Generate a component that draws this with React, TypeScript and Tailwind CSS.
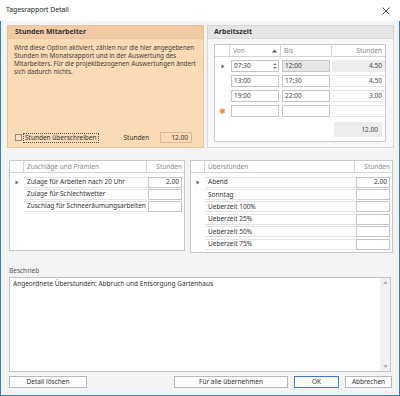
import { ReactNode } from "react";

const ueberstunden = ["Abend", "Sonntag", "Ueberzeit 100%", "Ueberzeit 25%", "Ueberzeit 50%", "Ueberzeit 75%"];
const zuschlaege = ["Zulage für Arbeiten nach 20 Uhr", "Zulage für Schlechtwetter", "Zuschlag für Schneeräumungsarbeiten"];

function RowMarker() {
  return (
    <svg width="4" height="5" viewBox="0 0 4 5">
      <path d="M0.5 0.5 L3.5 2.5 L0.5 4.5 Z" fill="#666" />
    </svg>
  );
}

function Btn({ children, w, primary }: { children: ReactNode; w: string; primary?: boolean }) {
  return (
    <div
      className={`${w} h-[12px] flex items-center justify-center border bg-[#fdfdfd] text-[6.5px] text-[#333] ${
        primary ? "border-[#3b7fd0]" : "border-[#b9b9b9]"
      }`}
    >
      {children}
    </div>
  );
}

export default function App() {
  return (
    <div className="w-[400px] h-[396px] flex flex-col overflow-hidden whitespace-nowrap bg-white font-['Noto_Sans',sans-serif] text-[#333]">
      {/* title */}
      <div className="h-[21px] shrink-0 flex items-center justify-between pl-[6px] pr-[10px] text-[6.8px] text-[#222]">
        <span>Tagesrapport Detail</span>
        <svg width="8" height="8" viewBox="0 0 8 8">
          <path d="M0.5 0.5 L7.5 7.5 M7.5 0.5 L0.5 7.5" stroke="#333" strokeWidth="0.9" />
        </svg>
      </div>

      <div className="flex-1 flex flex-col bg-[#f4f4f4] border-x border-b border-[#2f7fd6] pt-[4px]">
        {/* top panels */}
        <div className="flex gap-[3px] pl-[6px] h-[123px] shrink-0">
          <div className="w-[197px] flex flex-col border border-[#e7c39c] bg-[#fbdab6]">
            <div className="h-[13px] flex items-center px-[7px] bg-[#f2cba4] border-b border-[#e9c39a] font-bold text-[7px] text-[#333]">
              Stunden Mitarbeiter
            </div>
            <div className="px-[6px] pt-[5px] text-[6.3px] leading-[8px] text-[#444]">
              Wird diese Option aktiviert, zählen nur die hier angegebenen
              <br />
              Stunden im Monatsrapport und in der Auswertung des
              <br />
              Mitarbeiters. Für die projektbezogenen Auswertungen ändert
              <br />
              sich dadurch nichts.
            </div>
            <div className="flex-1" />
            <div className="flex items-center h-[11px] mb-[4px] pl-[7px] pr-[11px] text-[6.5px] text-[#333]">
              <div className="w-[7px] h-[7px] border border-[#8d8d8d] bg-[#fce3c6]" />
              <div className="ml-[1px] px-[1px] border border-dotted border-[#555] leading-[8px]">Stunden überschreiben</div>
              <div className="ml-[25px]">Stunden</div>
              <div className="ml-auto w-[32px] h-[11px] border border-[#e0b98f] flex items-center justify-end pr-[3px]">12.00</div>
            </div>
          </div>

          <div className="w-[187px] flex flex-col border border-[#d6d6d6] bg-[#f8f8f8]">
            <div className="h-[13px] flex items-center px-[6px] bg-[#e5e5e5] border-b border-[#dadada] font-bold text-[7px] text-[#333]">
              Arbeitszeit
            </div>
            <div className="ml-[6px] mt-[5px] w-[172px] h-[98px] border border-[#c9c9c9] bg-white flex flex-col text-[6.5px]">
              <div className="h-[12px] flex border-b border-[#d4d4d4] text-[#8a8a8a]">
                <div className="w-[15px] border-r border-[#d4d4d4]" />
                <div className="w-[51px] flex items-center justify-between px-[3px] border-r border-[#d4d4d4]">
                  <span>Von</span>
                  <svg width="5" height="4" viewBox="0 0 5 4">
                    <path d="M0 3.5 L2.5 0.5 L5 3.5 Z" fill="#555" />
                  </svg>
                </div>
                <div className="w-[51px] flex items-center px-[3px] border-r border-[#d4d4d4]">Bis</div>
                <div className="flex-1 flex items-center justify-end px-[3px]">Stunden</div>
              </div>
              {[
                ["07:30", "12:00", "4.50"],
                ["13:00", "17:30", "4.50"],
                ["19:00", "22:00", "3.00"],
                ["", "", ""],
              ].map((r, i) => (
                <div key={i} className="h-[15px] pt-[3px] flex text-[#444]">
                  <div className="w-[15px] flex items-center justify-center">
                    {i === 0 && <RowMarker />}
                    {i === 3 && <span className="text-[#f08a24] text-[8px] leading-none">✱</span>}
                  </div>
                  <div className="w-[51px] pl-[1px] pr-[2px]">
                    <div className="h-[12px] border border-[#c4c4c4] bg-white flex items-center justify-between pl-[2px] pr-[1px]">
                      <span>{r[0]}</span>
                      {i === 0 && (
                        <svg width="4" height="8" viewBox="0 0 4 8">
                          <path d="M0.5 3 L2 1.3 L3.5 3 Z M0.5 5 L2 6.7 L3.5 5 Z" fill="#555" />
                        </svg>
                      )}
                    </div>
                  </div>
                  <div className="w-[51px] pl-[1px] pr-[2px]">
                    <div
                      className={`h-[12px] border border-[#c4c4c4] flex items-center pl-[2px] ${
                        i === 0 ? "bg-[#e6e6e6]" : "bg-white"
                      }`}
                    >
                      {r[1]}
                    </div>
                  </div>
                  <div
                    className={`flex-1 h-[12px] flex items-center justify-end pr-[3px] border-y ${
                      i === 0 ? "bg-[#ececec] border-[#ececec]" : "bg-white border-[#e4e4e4]"
                    }`}
                  >
                    {r[2]}
                  </div>
                </div>
              ))}
              <div className="flex-1 flex items-start justify-end pt-[5px] pr-[3px]">
                <div className="w-[48px] h-[15px] bg-[#ececec] flex items-center justify-end pr-[4px] text-[#444]">12.00</div>
              </div>
            </div>
          </div>
        </div>

        {/* grids */}
        <div className="flex gap-[5px] pl-[8px] mt-[12px] h-[93px] shrink-0 items-start text-[6.5px]">
          <div className="w-[176px] h-[91px] border border-[#c9c9c9] bg-white flex flex-col">
            <div className="h-[12px] flex border-b border-[#d4d4d4] text-[#8a8a8a]">
              <div className="w-[14px] border-r border-[#d4d4d4]" />
              <div className="w-[123px] flex items-center px-[3px] border-r border-[#d4d4d4]">Zuschläge und Prämien</div>
              <div className="flex-1 flex items-center justify-end px-[2px]">Stunden</div>
            </div>
            <div className="h-[3px]" />
            {zuschlaege.map((z, i) => (
              <div key={z} className="h-[12px] flex items-center text-[#333]">
                <div className="w-[14px] flex items-center justify-center">{i === 0 && <RowMarker />}</div>
                <div className="w-[123px] h-[11px] flex items-center px-[3px] border-y border-[#e2e2e2]">{z}</div>
                <div className="flex-1 pl-[1px] pr-[2px]">
                  <div className="h-[11px] border border-[#c4c4c4] flex items-center justify-end pr-[2px]">
                    {i === 0 ? "2.00" : ""}
                  </div>
                </div>
              </div>
            ))}
          </div>

          <div className="w-[203px] h-[93px] border border-[#c9c9c9] bg-white flex flex-col">
            <div className="h-[12px] flex border-b border-[#d4d4d4] text-[#8a8a8a]">
              <div className="w-[14px] border-r border-[#d4d4d4]" />
              <div className="w-[150px] flex items-center px-[3px] border-r border-[#d4d4d4]">Überstunden</div>
              <div className="flex-1 flex items-center justify-end px-[2px]">Stunden</div>
            </div>
            <div className="h-[3px]" />
            {ueberstunden.map((u, i) => (
              <div key={u} className="h-[12.4px] flex items-center text-[#333]">
                <div className="w-[14px] flex items-center justify-center">{i === 0 && <RowMarker />}</div>
                <div className="w-[150px] h-[11px] flex items-center px-[3px] border-y border-[#e2e2e2]">{u}</div>
                <div className="flex-1 pl-[1px] pr-[2px]">
                  <div className="h-[11px] border border-[#c4c4c4] flex items-center justify-end pr-[2px]">
                    {i === 0 ? "2.00" : ""}
                  </div>
                </div>
              </div>
            ))}
          </div>
        </div>

        {/* Beschrieb */}
        <div className="mt-[13px] h-[10px] pl-[8px] flex items-center text-[6.5px] text-[#555]">Beschrieb</div>
        <div className="mt-[1px] ml-[8px] w-[382px] h-[95px] border border-[#c4c4c4] bg-white flex shrink-0">
          <div className="flex-1 px-[3px] pt-[2px] text-[6.5px] leading-[8px] text-[#333]">
            Angeordnete Überstunden: Abbruch und Entsorgung Gartenhaus
          </div>
          <div className="w-[10px] bg-[#f0f0f0] flex flex-col items-center justify-between py-[3px]">
            <svg width="5" height="3" viewBox="0 0 5 3">
              <path d="M0 3 L2.5 0 L5 3 Z" fill="#b5b5b5" />
            </svg>
            <svg width="5" height="3" viewBox="0 0 5 3">
              <path d="M0 0 L2.5 3 L5 0 Z" fill="#b5b5b5" />
            </svg>
          </div>
        </div>

        {/* buttons */}
        <div className="mt-[4px] flex pl-[8px] pr-[7px]">
          <Btn w="w-[78px]">Detail löschen</Btn>
          <div className="flex-1" />
          <Btn w="w-[114px]">Für alle übernehmen</Btn>
          <div className="w-[6px]" />
          <Btn w="w-[45px]" primary>
            OK
          </Btn>
          <div className="w-[6px]" />
          <Btn w="w-[47px]">Abbrechen</Btn>
        </div>
      </div>
    </div>
  );
}
